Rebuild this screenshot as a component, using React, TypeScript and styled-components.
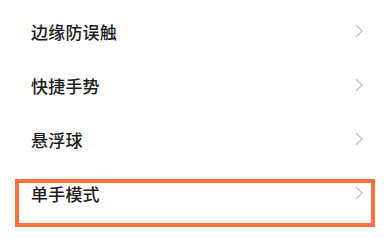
import React from "react";
import styled, { createGlobalStyle } from "styled-components";

const GlobalStyle = createGlobalStyle`
  body {
    margin: 0;
    background: #ffffff;
    font-family: "Noto Sans CJK SC", "Noto Sans", sans-serif;
  }
`;

const List = styled.div`
  width: 391px;
  height: 238px;
  padding-top: 4px;
  box-sizing: border-box;
  background: #fff;
  overflow: hidden;
`;

const Row = styled.div`
  position: relative;
  display: flex;
  align-items: center;
  justify-content: space-between;
  height: 54px;
  padding: 0 28px 0 31px;
`;

const Label = styled.span`
  font-size: 17px;
  font-weight: 500;
  color: #1b1b1b;
  letter-spacing: 0.2px;
`;

const Highlight = styled.div`
  position: absolute;
  left: 15px;
  top: 13px;
  width: 360px;
  height: 48px;
  border: 4px solid #ff7043;
  box-sizing: border-box;
  pointer-events: none;
`;

const Chevron = () => (
  <svg width="8" height="14" viewBox="0 0 8 14">
    <path d="M1 1 L7 7 L1 13" fill="none" stroke="#c2c2c2" strokeWidth="1.2" />
  </svg>
);

const items = ["边缘防误触", "快捷手势", "悬浮球", "单手模式"];

const App: React.FC = () => {
  return (
    <>
      <GlobalStyle />
      <List>
        {items.map((item, index) => (
          <Row key={index}>
            <Label>{item}</Label>
            <Chevron />
            {index === items.length - 1 && <Highlight />}
          </Row>
        ))}
      </List>
    </>
  );
};

export default App;
